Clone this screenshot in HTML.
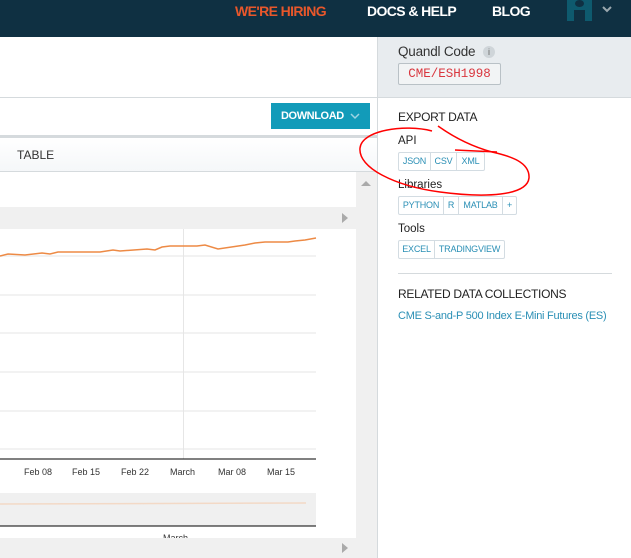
<!DOCTYPE html>
<html><head><style>
*{margin:0;padding:0;box-sizing:border-box}
body{width:631px;height:558px;overflow:hidden;position:relative;background:#fff;font-family:"Liberation Sans",sans-serif}
.a{position:absolute}
.nav{left:0;top:0;width:631px;height:37px;background:#0f3042}
.nl{top:2px;font-size:14px;font-weight:bold;color:#fff;letter-spacing:-0.6px}
.btns{display:flex;border:1px solid #d3dce2;border-radius:2px;height:19px}
.btns span{font-size:9px;color:#2a8fb5;line-height:17px;border-right:1px solid #d3dce2;text-align:center;letter-spacing:-0.2px}
.btns span:last-child{border-right:none}
.lbl{font-size:11.5px;color:#222}
</style></head><body>
<div class="a nav"></div>
<div class="a nl" style="left:235px;top:3px;color:#e8572b">WE'RE HIRING</div>
<div class="a nl" style="left:367px;top:3px">DOCS &amp; HELP</div>
<div class="a nl" style="left:492px;top:3px">BLOG</div>
<div class="a" style="left:567px;top:0;width:25px;height:21px;background:#0e5a6e"></div>
<div class="a" style="left:575px;top:0;width:9px;height:7px;border-radius:50%;background:#0f3042"></div>
<div class="a" style="left:574px;top:10px;width:11px;height:11px;background:#0f3042"></div>
<svg class="a" style="left:602px;top:6px" width="10" height="7"><path d="M1 1 L5 5 L9 1" stroke="#9aa7ae" stroke-width="2" fill="none"/></svg>

<div class="a" style="left:377px;top:37px;width:1px;height:521px;background:#d5dadd"></div>
<div class="a" style="left:378px;top:37px;width:253px;height:60px;background:#e8ecef"></div>
<div class="a" style="left:0;top:97px;width:631px;height:1px;background:#d5dadd"></div>
<div class="a" style="left:398px;top:44px;font-size:13.5px;color:#333;letter-spacing:-0.2px">Quandl Code</div>
<div class="a" style="left:483px;top:46px;width:12px;height:12px;border-radius:50%;background:#cfd5d9;color:#666;font-size:9px;text-align:center;line-height:12px">i</div>
<div class="a" style="left:398px;top:63px;width:103px;height:22px;border:1px solid #b9c1c6;border-radius:2px;background:#f2f4f5;color:#d9363e;font-family:'Liberation Mono',monospace;font-size:12.5px;text-align:center;line-height:20px">CME/ESH1998</div>
<div class="a" style="left:398px;top:110px;font-size:12px;color:#222;letter-spacing:-0.3px">EXPORT DATA</div>
<div class="a lbl" style="left:398px;top:135px">API</div>
<div class="a btns" style="left:398px;top:152px"><span style="width:32px">JSON</span><span style="width:26px">CSV</span><span style="width:27px">XML</span></div>
<div class="a lbl" style="left:398px;top:179px">Libraries</div>
<div class="a btns" style="left:398px;top:196px"><span style="width:45px">PYTHON</span><span style="width:15px">R</span><span style="width:44px">MATLAB</span><span style="width:13px">+</span></div>
<div class="a lbl" style="left:398px;top:223px">Tools</div>
<div class="a btns" style="left:398px;top:240px"><span style="width:36px">EXCEL</span><span style="width:69px">TRADINGVIEW</span></div>
<div class="a" style="left:398px;top:273px;width:214px;height:1px;background:#d5dadd"></div>
<div class="a" style="left:398px;top:287px;font-size:12px;color:#222;letter-spacing:-0.3px">RELATED DATA COLLECTIONS</div>
<div class="a" style="left:398px;top:310px;font-size:11px;color:#2a8fb5;letter-spacing:-0.25px">CME S-and-P 500 Index E-Mini Futures (ES)</div>

<div class="a" style="left:271px;top:103px;width:99px;height:26px;background:#129bb9;color:#fff;font-size:11px;font-weight:bold;line-height:26px;padding-left:10px;letter-spacing:-0.4px">DOWNLOAD</div>
<svg class="a" style="left:350px;top:113px" width="10" height="7"><path d="M1 1 L5 5 L9 1" stroke="#9fd4e3" stroke-width="1.5" fill="none"/></svg>
<div class="a" style="left:0;top:135px;width:377px;height:3px;background:#d5dadd"></div>
<div class="a" style="left:0;top:138px;width:377px;height:33px;background:linear-gradient(#fff,#f5f7f9)"></div>
<div class="a" style="left:17px;top:148px;font-size:12px;color:#333">TABLE</div>
<div class="a" style="left:0;top:171px;width:377px;height:1px;background:#d5dadd"></div>

<div class="a" style="left:356px;top:172px;width:21px;height:386px;background:#f0f0f0"></div>
<svg class="a" style="left:361px;top:180px" width="10" height="6"><path d="M0 6 L5 1 L10 6Z" fill="#aaa"/></svg>
<div class="a" style="left:0;top:207px;width:356px;height:22px;background:#f0f0f0"></div>
<svg class="a" style="left:342px;top:213px" width="6" height="10"><path d="M0 0 L6 5 L0 10Z" fill="#aaa"/></svg>
<svg class="a" style="left:0;top:0" width="356" height="558">
<g stroke="#f2f2f2" stroke-width="2">
<line x1="0" y1="256" x2="316" y2="256"/><line x1="0" y1="295" x2="316" y2="295"/><line x1="0" y1="333" x2="316" y2="333"/><line x1="0" y1="372" x2="316" y2="372"/><line x1="0" y1="411" x2="316" y2="411"/><line x1="0" y1="449" x2="316" y2="449"/></g>
<line x1="183.5" y1="229" x2="183.5" y2="459" stroke="#e6e6e6"/>
<line x1="0" y1="459" x2="316" y2="459" stroke="#000"/>
<polyline fill="none" stroke="#ed8a45" stroke-width="1.5" points="0,256 8,254 25,255 42,253 50,254 58,252 100,252 113,250 120,251 147,249 155,250 162,247 170,246 197,246 205,245 218,249 245,245 255,243 265,242 288,242 295,241 305,240 316,238"/>
<rect x="0" y="493" width="316" height="33" fill="#f0f0f0"/>
<line x1="0" y1="504" x2="306" y2="503" stroke="#f3d9c6" stroke-width="1.5"/>
<line x1="0" y1="526" x2="316" y2="526" stroke="#000"/>
<g font-size="9" fill="#333" font-family="Liberation Sans,sans-serif">
<text x="-5" y="475">y</text><text x="24" y="475">Feb 08</text><text x="72" y="475">Feb 15</text><text x="121" y="475">Feb 22</text><text x="170" y="475">March</text><text x="218" y="475">Mar 08</text><text x="267" y="475">Mar 15</text>
<text x="163" y="541">March</text></g>
</svg>
<div class="a" style="left:0;top:538px;width:356px;height:20px;background:#f0f0f0"></div>
<svg class="a" style="left:342px;top:543px" width="6" height="10"><path d="M0 0 L6 5 L0 10Z" fill="#aaa"/></svg>

<svg class="a" style="left:0;top:0" width="631" height="558">
<path d="M432 131 C405 124 362 130 360 148 C358 168 395 186 440 192 C485 198 527 196 529 178 C530 162 510 156 492 152 C470 146 452 136 438 126" fill="none" stroke="#f00" stroke-width="1.5"/>
<path d="M455 150 L497 152" fill="none" stroke="#f00" stroke-width="1.5"/>
</svg>
</body></html>
